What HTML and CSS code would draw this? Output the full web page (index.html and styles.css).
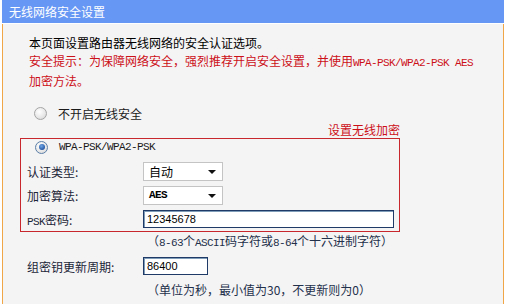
FILE: index.html
```html
<!DOCTYPE html>
<html lang="zh-CN">
<head>
    <meta charset="UTF-8">
    <meta name="viewport" content="width=device-width, initial-scale=1.0">
    <title>无线网络安全设置</title>
    <link rel="stylesheet" href="styles.css">
</head>
<body>
    <div class="panel">
        <div class="title">无线网络安全设置</div>
        <div class="content">
            <p class="intro">本页面设置路由器无线网络的安全认证选项。</p>
            <p class="warn">安全提示：为保障网络安全，强烈推荐开启安全设置，并使用<span class="en">WPA-PSK/WPA2-PSK AES</span><br>加密方法。</p>

            <!-- 不加密 -->
            <div class="option first"><span class="radio"></span>不开启无线安全</div>

            <!-- 加密设置 -->
            <div class="tag">设置无线加密</div>
            <div class="box">
                <div class="option"><span class="radio checked"></span><span class="en">WPA-PSK/WPA2-PSK</span></div>
                <div class="row">
                    <label>认证类型:</label>
                    <div class="select"><span>自动</span><i class="arrow"></i></div>
                </div>
                <div class="row">
                    <label>加密算法:</label>
                    <div class="select"><span class="en bold">AES</span><i class="arrow"></i></div>
                </div>
                <div class="row">
                    <label><span class="en">PSK</span>密码:</label>
                    <input type="text" class="text wide" value="12345678">
                </div>
            </div>
            <div class="hint">（<span class="en">8-63</span>个<span class="en">ASCII</span>码字符或<span class="en">8-64</span>个十六进制字符）</div>

            <div class="row outer">
                <label>组密钥更新周期:</label>
                <input type="text" class="text short" value="86400">
            </div>
            <div class="hint second">（单位为秒，最小值为30，不更新则为0）</div>
        </div>
    </div>
</body>
</html>
```

FILE: styles.css
```css
body {
    margin: 0;
    font-family: "Noto Sans CJK SC", sans-serif;
    font-size: 12px;
    background-color: #fff;
}
.panel {
    margin-left: 2px;
    width: 502px;
}
.title {
    height: 23px;
    line-height: 23px;
    padding-left: 7px;
    background-color: #6797f4;
    color: #fff;
    border-bottom: 1px solid #fff;
}
.content {
    height: 280px;
    padding: 10px 0 0 17px;
    box-sizing: border-box;
    background-color: #f5f4f5;
    border-left: 1px solid #f0a646;
    border-right: 1px solid #f0a646;
}
.en {
    font-family: "Liberation Mono", monospace;
    font-size: 11px;
    letter-spacing: -0.6px;
}
.bold {
    font-weight: bold;
}
p {
    margin: 0 0 0 9px;
    line-height: 18px;
}
.intro {
    color: #000;
}
.warn {
    color: #cc1018;
}
.option {
    display: flex;
    align-items: center;
    height: 16px;
    color: #1a1a1a;
}
.option.first {
    height: 18px;
    margin-top: 14px;
}
.radio {
    width: 11px;
    height: 11px;
    margin: 0 11px 0 14px;
    border: 1px solid #a4a4a4;
    border-radius: 50%;
    background: radial-gradient(circle at 40% 35%, #fff 0%, #e6e6e6 60%, #cfcfcf 100%);
    box-sizing: content-box;
    display: flex;
    align-items: center;
    justify-content: center;
}
.radio.checked {
    border-color: #5a7ea8;
}
.radio.checked::after {
    content: "";
    width: 6px;
    height: 6px;
    border-radius: 50%;
    background: radial-gradient(circle at 40% 35%, #6fa6e6 0%, #1d4e9c 80%);
}
.tag {
    width: 380px;
    line-height: 16px;
    text-align: right;
    color: #cc1018;
}
.box {
    width: 380px;
    padding: 0 0 0 6px;
    box-sizing: border-box;
    border: 1px solid #c8282d;
}
.box .option {
    margin-left: -6px;
    margin-bottom: 4px;
}
.row {
    display: flex;
    align-items: center;
    height: 24px;
}
.row label {
    width: 116px;
    color: #1c2638;
}
.row.outer {
    margin: 2px 0 0 7px;
}
.select {
    position: relative;
    width: 80px;
    height: 19px;
    padding-left: 5px;
    box-sizing: border-box;
    display: flex;
    align-items: center;
    background-color: #fff;
    border: 1px solid #c4c4c4;
    color: #000;
}
.arrow {
    position: absolute;
    right: 6px;
    top: 7px;
    width: 0;
    height: 0;
    border-left: 4px solid transparent;
    border-right: 4px solid transparent;
    border-top: 4px solid #111;
}
input.text {
    height: 18px;
    padding: 0 3px;
    box-sizing: border-box;
    font-family: "Liberation Sans", sans-serif;
    font-size: 11px;
    color: #000;
    background-color: #fff;
    border: 1px solid #1f3a66;
    box-shadow: inset 1px 1px 0 #7f9db9;
    outline: none;
}
input.wide {
    width: 251px;
}
input.short {
    width: 65px;
}
.hint {
    margin-left: 127px;
    line-height: 18px;
    color: #23304a;
}
.hint.second {
    margin-top: 3px;
}
```
